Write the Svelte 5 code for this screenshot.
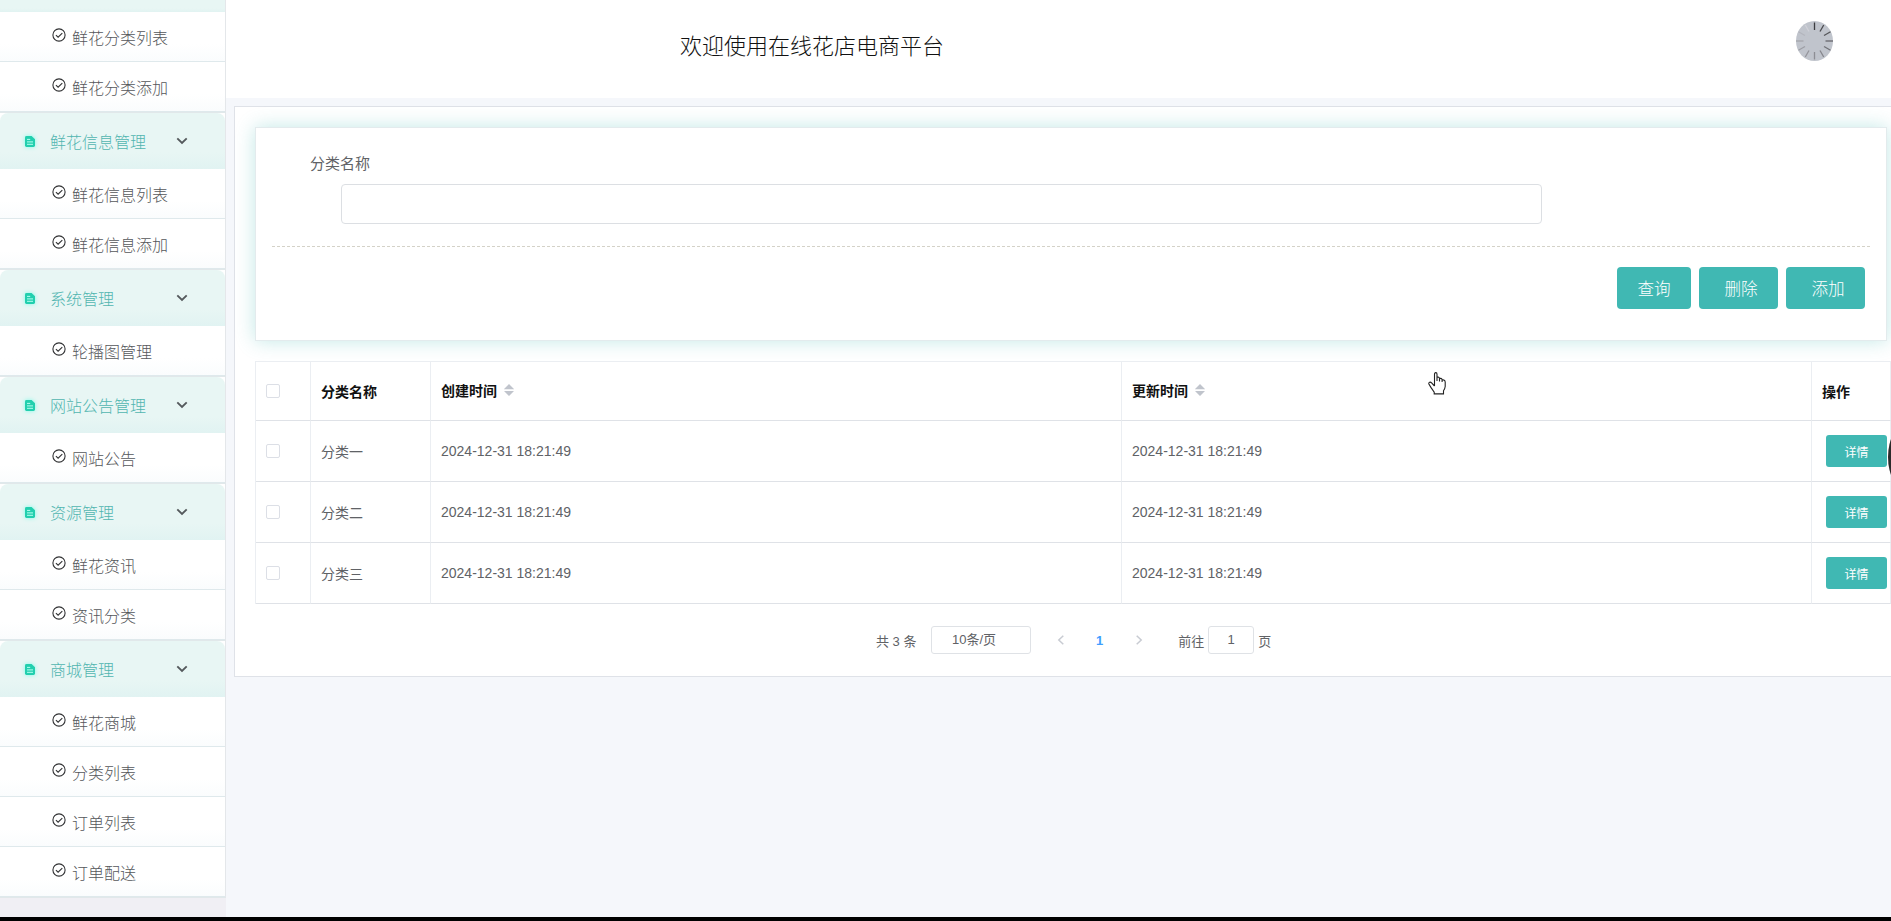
<script>
    const menus = [
        { title: "", items: ["鲜花分类列表", "鲜花分类添加"] },
        { title: "鲜花信息管理", items: ["鲜花信息列表", "鲜花信息添加"] },
        { title: "系统管理", items: ["轮播图管理"] },
        { title: "网站公告管理", items: ["网站公告"] },
        { title: "资源管理", items: ["鲜花资讯", "资讯分类"] },
        { title: "商城管理", items: ["鲜花商城", "分类列表", "订单列表", "订单配送"] }
    ];

    const rows = [
        { name: "分类一", created: "2024-12-31 18:21:49", updated: "2024-12-31 18:21:49" },
        { name: "分类二", created: "2024-12-31 18:21:49", updated: "2024-12-31 18:21:49" },
        { name: "分类三", created: "2024-12-31 18:21:49", updated: "2024-12-31 18:21:49" }
    ];

    // spokes of the loading avatar, darkest first
    const spokes = ["#3c3d41", "#4b4c50", "#55565a", "#66676c", "#707177", "#85868c", "#8d8e94", "#94959b", "#9c9da4", "#a5a6ac", "#b3b5bd", "#cfd1d8", "#e2e3e8"];
    const spokeAngles = [0, 30, 60, 90, 120, 150, 180, 210, 240, 270, 300, 330];

    let name = "";
    let page = 1;
</script>

<div class="app">
    <aside class="sidebar">
        {#each menus as menu}
            <div class="group">
                {#if menu.title}
                    <div class="group-title">
                        <svg class="doc" width="10" height="11" viewBox="0 0 10 11">
                            <path d="M1.5 0H6.6L10 3.2V9.6Q10 11 8.6 11H1.4Q0 11 0 9.6V1.4Q0 0 1.5 0Z" fill="#22cfae" />
                            <path d="M2 3.4H5.2M2 5.9H8M2 8.3H8" stroke="#b5fff0" stroke-width="1" />
                        </svg>
                        <span>{menu.title}</span>
                        <svg class="arrow" width="12" height="8" viewBox="0 0 12 8">
                            <path d="M1.3 1.4L6 5.9L10.7 1.4" fill="none" stroke="#54595c" stroke-width="1.9" />
                        </svg>
                    </div>
                {:else}
                    <div class="group-title clipped"></div>
                {/if}
                {#each menu.items as item}
                    <div class="item">
                        <svg width="14" height="14" viewBox="0 0 14 14" fill="none" stroke="#303133" stroke-width="1.1">
                            <circle cx="7" cy="7" r="6.1" />
                            <path d="M3.9 7.1L6.1 9.2L10.3 5.1" />
                        </svg>
                        <span>{item}</span>
                    </div>
                {/each}
            </div>
        {/each}
    </aside>

    <div class="main">
        <header>
            <h1>欢迎使用在线花店电商平台</h1>
            <svg class="avatar" width="37" height="40" viewBox="0 0 37 40">
                <ellipse cx="18.5" cy="20" rx="18.5" ry="20" fill="#c0c4cc" />
                {#each spokeAngles as angle, i}
                    <path d="M18.5 1.5V9" stroke={spokes[i]} stroke-width="1.3" transform={`rotate(${angle} 18.5 20)`} />
                {/each}
            </svg>
        </header>

        <section class="content">
            <div class="search">
                <label for="name">分类名称</label>
                <input id="name" bind:value={name} />
                <div class="buttons">
                    <button>查询</button>
                    <button class="wide">删除</button>
                    <button class="wide">添加</button>
                </div>
            </div>

            <div class="table">
                <div class="row head">
                    <div class="cell"><i class="checkbox"></i></div>
                    <div class="cell">分类名称</div>
                    <div class="cell sortable">创建时间 <i class="sort"></i></div>
                    <div class="cell sortable">更新时间 <i class="sort"></i></div>
                    <div class="cell">操作</div>
                </div>
                {#each rows as row}
                    <div class="row">
                        <div class="cell"><i class="checkbox"></i></div>
                        <div class="cell">{row.name}</div>
                        <div class="cell">{row.created}</div>
                        <div class="cell">{row.updated}</div>
                        <div class="cell"><button class="detail">详情</button></div>
                    </div>
                {/each}
            </div>

            <div class="pagination">
                <span class="total">共 3 条</span>
                <span class="size">10条/页</span>
                <svg class="prev" width="8" height="10" viewBox="0 0 8 10"><path d="M6.3 .8L1.8 5L6.3 9.2" /></svg>
                <b>{page}</b>
                <svg class="next" width="8" height="10" viewBox="0 0 8 10"><path d="M1.7 .8L6.2 5L1.7 9.2" /></svg>
                <span class="goto">前往</span>
                <span class="jump">{page}</span>
                <span class="unit">页</span>
            </div>
        </section>
    </div>

    <svg class="cursor" width="18" height="23" viewBox="0 0 18 23">
        <path d="M6.5 14V2.2Q6.5 .6 7.8 .6Q9 .6 9 2.2V9V6Q9.1 4.9 10.3 5.1Q11.5 5.3 11.5 6.6V9.5V7.2Q11.8 6.1 12.9 6.4Q14.1 6.7 14.1 7.9V10V8.5Q14.5 7.5 15.5 7.9Q17.2 8.4 17.2 10V14.5Q17 16.6 15.5 18.8V21.9H6.2V20.2L2.9 15.4L.9 12Q.5 10.7 1.6 10.2Q2.7 9.9 3.6 10.9L6.5 14" fill="#fff" stroke="#222" stroke-width="1.1" />
    </svg>
    <div class="knob"></div>
</div>

<style>
    :global(body) {
        margin: 0;
        overflow: hidden;
        background: #000;
    }

    .app {
        position: relative;
        display: flex;
        width: 1891px;
        height: 917px;
        overflow: hidden;
        background: #f5f7fb;
        color: #606266;
        font-family: "Liberation Sans", "Noto Sans CJK SC", sans-serif;
        font-size: 14px;
    }

    .app * {
        box-sizing: border-box;
    }

    .sidebar {
        flex: none;
        width: 226px;
        background: #f0eff4;
    }

    .group {
        border-right: 1px solid #e4e7ea;
        border-bottom: 1px solid #e1e8ea;
        background: #fff;
    }

    .group-title {
        display: flex;
        align-items: center;
        height: 56px;
        padding: 0 37px 0 25px;
        border-radius: 8px 8px 0 0;
        background: linear-gradient(#e8f6f4 70%, #e1f3f2);
        color: #51b5b0;
        font-size: 16px;
        font-weight: 300;
    }

    .group-title.clipped {
        height: 12px;
        border-radius: 0;
    }

    .group-title span {
        flex: 1;
        margin-left: 15px;
    }

    .doc {
        overflow: visible;
        filter: drop-shadow(0 0 2px #7ffbe8);
    }

    .item {
        display: flex;
        align-items: center;
        height: 50px;
        padding-left: 52px;
        border-bottom: 1px solid #dfe9ec;
        background: linear-gradient(#fff 65%, #fafcfd);
        color: #55575b;
        font-size: 16px;
        font-weight: 300;
    }

    .item svg {
        margin: -4px 6px 0 0;
    }

    .main {
        flex: none;
        width: 1665px;
    }

    header {
        display: flex;
        justify-content: space-between;
        height: 98px;
        padding: 21px 58px 0 454px;
        background: #fff;
    }

    h1 {
        margin: 0;
        color: #111;
        font-size: 22px;
        font-weight: 300;
        line-height: 52px;
    }

    .content {
        width: 1670px;
        height: 571px;
        margin: 8px 0 0 8px;
        padding: 20px 0 0 20px;
        border: 1px solid #dfe2e8;
        background: #fff;
    }

    .search {
        width: 1632px;
        height: 214px;
        padding: 24px 16px 0;
        border: 1px solid #e3ebed;
        background: #fff;
        box-shadow: 0 0 18px rgba(64, 184, 178, 0.32);
    }

    label {
        display: block;
        margin-left: 38px;
        font-size: 15px;
        line-height: 24px;
    }

    input {
        display: block;
        width: 1201px;
        height: 40px;
        margin: 8px 0 0 69px;
        border: 1px solid #dcdfe3;
        border-radius: 4px;
        outline: none;
    }

    .buttons {
        display: flex;
        justify-content: flex-end;
        gap: 8px;
        margin-top: 22px;
        padding: 20px 5px 0 0;
        border-top: 1px dashed #d4d2c8;
    }

    button {
        width: 74px;
        height: 42px;
        padding: 0;
        border: 0;
        border-radius: 4px;
        background: #40b8b3;
        color: #fff;
        font-family: inherit;
        font-size: 16.6px;
        font-weight: 300;
    }

    button.wide {
        width: 79px;
        padding-left: 5px;
    }

    .table {
        width: 1636px;
        margin-top: 20px;
        border: 1px solid #ebeef2;
        border-width: 1px 0 0 1px;
    }

    .row {
        display: grid;
        grid-template-columns: 55px 120px 691px 690px 79px;
        height: 61px;
    }

    .row.head {
        height: 59px;
        color: #111;
        font-weight: 700;
    }

    .cell {
        display: flex;
        align-items: center;
        padding-left: 10px;
        border-right: 1px solid #ebeef2;
        border-bottom: 1px solid #dfe2e7;
    }

    .cell.sortable {
        padding-bottom: 2px;
    }

    .checkbox {
        width: 14px;
        height: 14px;
        border: 1px solid #dcdfe6;
        border-radius: 2px;
    }

    .sort {
        width: 10px;
        height: 12px;
        margin-left: 7px;
        background: #c0c4cc;
        clip-path: polygon(50% 0, 100% 42%, 100% 43%, 0 43%, 0 58%, 100% 58%, 50% 100%, 0 58%, 0 42%);
    }

    button.detail {
        width: 61px;
        height: 32px;
        margin-left: 4px;
        border-radius: 3px;
        font-size: 12px;
        font-weight: 400;
    }

    .pagination {
        display: flex;
        align-items: center;
        height: 28px;
        margin: 22px 0 0 621px;
        font-size: 13px;
    }

    .total {
        width: 55px;
    }

    .size,
    .jump {
        height: 28px;
        border: 1px solid #dfe2e6;
        border-radius: 3px;
        line-height: 26px;
    }

    .size {
        width: 100px;
        padding-left: 20px;
    }

    .pagination path {
        fill: none;
        stroke: #c8cbd2;
        stroke-width: 1.5;
    }

    .prev {
        margin: 0 31px 0 26px;
    }

    .pagination b {
        color: #409eff;
    }

    .next {
        margin: 0 35px 0 32px;
    }

    .goto {
        width: 30px;
    }

    .jump {
        width: 46px;
        text-align: center;
    }

    .unit {
        margin-left: 4px;
    }

    .cursor {
        position: absolute;
        left: 1428px;
        top: 372px;
    }

    /* floating handle, mostly off the right edge */
    .knob {
        position: absolute;
        left: 1888px;
        top: 423px;
        width: 40px;
        height: 68px;
        border-radius: 50%;
        background: #2b2b2b;
    }
</style>
